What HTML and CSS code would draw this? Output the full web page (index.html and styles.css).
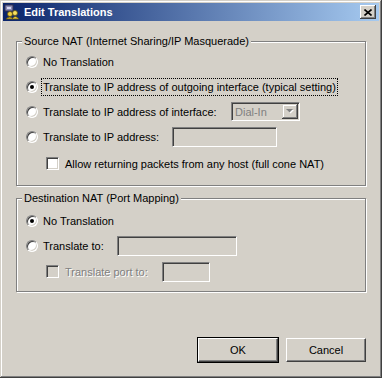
FILE: index.html
```html
<!DOCTYPE html>
<html lang="en">
<head>
    <meta charset="UTF-8">
    <title>Edit Translations</title>
    <link rel="stylesheet" href="styles.css">
</head>
<body>
    <div class="window">
        <div class="titlebar">
            <svg class="app-icon" viewBox="0 0 16 16" width="16" height="16">
                <rect x="1" y="1" width="8" height="6" fill="#8c8cb4" stroke="#303050" stroke-width="1"/>
                <rect x="3" y="3" width="4" height="2" fill="#d8d8f0"/>
                <circle cx="6" cy="10" r="2.5" fill="#f0d040" stroke="#605010" stroke-width="0.8"/>
                <circle cx="11" cy="9" r="2.5" fill="#f8e060" stroke="#605010" stroke-width="0.8"/>
                <path d="M2 15 Q6 11 9 15 Z" fill="#e0c030" stroke="#605010" stroke-width="0.8"/>
                <path d="M8 15 Q11 10 15 15 Z" fill="#f0d040" stroke="#605010" stroke-width="0.8"/>
            </svg>
            <span class="title">Edit Translations</span>
            <span class="close-btn">
                <svg viewBox="0 0 8 7" width="8" height="7">
                    <path d="M0.5 0.5 L7.5 6.5 M7.5 0.5 L0.5 6.5" stroke="#000" stroke-width="1.6"/>
                </svg>
            </span>
        </div>

        <div class="content">
            <fieldset class="group group-source">
                <legend>Source NAT (Internet Sharing/IP Masquerade)</legend>
                <div class="row">
                    <span class="radio"></span>
                    <span class="label">No Translation</span>
                </div>
                <div class="row">
                    <span class="radio checked"></span>
                    <span class="label focused">Translate to IP address of outgoing interface (typical setting)</span>
                </div>
                <div class="row">
                    <span class="radio"></span>
                    <span class="label w-iface">Translate to IP address of interface:</span>
                    <span class="combo">
                        <span class="combo-text">Dial-In</span>
                        <span class="combo-btn">
                            <svg viewBox="0 0 8 5" width="8" height="5">
                                <path d="M1 1 H8 L4.5 4.5 Z" fill="#fff"/>
                                <path d="M0 0 H7 L3.5 3.5 Z" fill="#808080"/>
                            </svg>
                        </span>
                    </span>
                </div>
                <div class="row">
                    <span class="radio"></span>
                    <span class="label w-ip">Translate to IP address:</span>
                    <span class="field field-ip"></span>
                </div>
                <div class="row row-sub">
                    <span class="check"></span>
                    <span class="label">Allow returning packets from any host (full cone NAT)</span>
                </div>
            </fieldset>

            <fieldset class="group group-dest">
                <legend>Destination NAT (Port Mapping)</legend>
                <div class="row">
                    <span class="radio checked"></span>
                    <span class="label">No Translation</span>
                </div>
                <div class="row">
                    <span class="radio"></span>
                    <span class="label w-dest">Translate to:</span>
                    <span class="field field-dest"></span>
                </div>
                <div class="row row-sub">
                    <span class="check disabled"></span>
                    <span class="label disabled w-port">Translate port to:</span>
                    <span class="field field-port"></span>
                </div>
            </fieldset>

            <div class="buttons">
                <button class="btn default">OK</button>
                <button class="btn">Cancel</button>
            </div>
        </div>
    </div>
</body>
</html>
```

FILE: styles.css
```css
body {
    margin: 0;
    background: #d4d0c8;
    font-family: "Liberation Sans", Arial, sans-serif;
    font-size: 11px;
    color: #000;
}

.window {
    width: 382px;
    height: 378px;
    box-sizing: border-box;
    padding: 3px;
    display: flex;
    flex-direction: column;
    background: #d4d0c8;
    box-shadow: inset -1px -1px 0 #404040, inset 1px 1px 0 #d4d0c8,
                inset -2px -2px 0 #808080, inset 2px 2px 0 #fff;
}

/* title bar */
.titlebar {
    height: 18px;
    display: flex;
    align-items: center;
    background: linear-gradient(to right, #0a246a, #a6caf0);
    color: #fff;
}

.app-icon {
    margin: 0 4px 0 1px;
}

.title {
    flex: 1;
    font-weight: bold;
}

.close-btn {
    width: 16px;
    height: 14px;
    margin-right: 3px;
    display: flex;
    align-items: center;
    justify-content: center;
    background: #d4d0c8;
    box-shadow: inset -1px -1px 0 #404040, inset 1px 1px 0 #fff,
                inset -2px -2px 0 #808080;
}

/* body */
.content {
    flex: 1;
    display: flex;
    flex-direction: column;
    padding: 14px 13px 13px;
}

.group {
    margin: 0;
    padding: 1px 0 9px 0;
    min-width: 0;
    border: 1px solid #808080;
    box-shadow: inset 1px 1px 0 #fff, 1px 1px 0 #fff;
}

.group legend {
    margin-left: 5px;
    padding: 0 2px;
    line-height: 13px;
    background: #d4d0c8;
}

.group-dest {
    margin-top: 6px;
    padding-top: 3px;
    padding-bottom: 7px;
}

.row {
    height: 25px;
    display: flex;
    align-items: center;
    padding-left: 9px;
}

.row-sub {
    padding-left: 29px;
    margin-top: 2px;
}

.group-dest .row-sub {
    margin-top: 1px;
}

.radio {
    width: 12px;
    height: 12px;
    box-sizing: border-box;
    margin-right: 3px;
    border-radius: 50%;
    background: #fff;
    border: 1px solid;
    border-color: #808080 #fff #fff #808080;
    box-shadow: inset 1px 1px 0 #404040, inset -1px -1px 0 #d4d0c8;
    display: flex;
    align-items: center;
    justify-content: center;
}

.radio.checked::after {
    content: "";
    width: 4px;
    height: 4px;
    border-radius: 50%;
    background: #000;
}

.check {
    width: 13px;
    height: 13px;
    box-sizing: border-box;
    margin-right: 4px;
    background: #fff;
    border: 1px solid;
    border-color: #808080 #fff #fff #808080;
    box-shadow: inset 1px 1px 0 #404040, inset -1px -1px 0 #d4d0c8;
}

.check.disabled {
    background: #d4d0c8;
}

.label {
    box-sizing: border-box;
    padding: 1px;
    border: 1px dotted transparent;
    line-height: 14px;
    white-space: nowrap;
}

.label.focused {
    border-color: #000;
}

.label.disabled {
    color: #808080;
    text-shadow: 1px 1px 0 #fff;
}

.w-iface { width: 190px; }
.w-ip { width: 131px; }
.w-dest { width: 76px; }
.w-port { width: 99px; }

.field,
.combo {
    box-sizing: border-box;
    height: 20px;
    background: #d4d0c8;
    border: 1px solid;
    border-color: #808080 #fff #fff #808080;
    box-shadow: inset 1px 1px 0 #404040, inset -1px -1px 0 #d4d0c8;
}

.field-ip { width: 105px; }
.field-dest { width: 120px; }
.field-port { width: 48px; }

.combo {
    width: 69px;
    height: 19px;
    display: flex;
    align-items: center;
    padding: 1px;
}

.combo-text {
    flex: 1;
    padding-left: 2px;
    color: #808080;
}

.combo-btn {
    width: 16px;
    height: 15px;
    display: flex;
    align-items: center;
    justify-content: center;
    background: #d4d0c8;
    box-shadow: inset -1px -1px 0 #404040, inset 1px 1px 0 #d4d0c8,
                inset -2px -2px 0 #808080, inset 2px 2px 0 #fff;
}

/* dialog buttons */
.buttons {
    margin-top: auto;
    display: flex;
    justify-content: flex-end;
    gap: 8px;
}

.btn {
    width: 80px;
    height: 24px;
    box-sizing: border-box;
    padding: 0;
    font: inherit;
    color: #000;
    background: #d4d0c8;
    border: 1px solid;
    border-color: #fff #404040 #404040 #fff;
    box-shadow: inset -1px -1px 0 #808080;
}

.btn.default {
    outline: 1px solid #000;
}
```
